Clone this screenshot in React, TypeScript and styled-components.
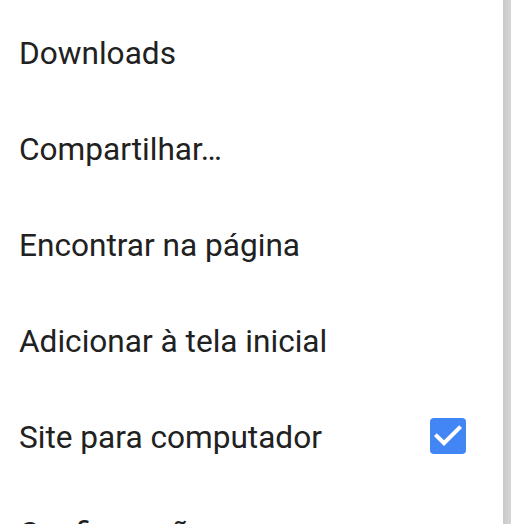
import React from "react";
import styled, { createGlobalStyle } from "styled-components";

const Global = createGlobalStyle`
  html, body { margin: 0; padding: 0; background: #ffffff; }
  body { font-family: Roboto, "Noto Sans", Arial, sans-serif; overflow: hidden; }
`;

const Screen = styled.div`
  display: flex;
  width: 511px;
  height: 524px;
  overflow: hidden;
`;

const Menu = styled.ul`
  flex: 1;
  margin: 0;
  padding: 6px 0 0 0;
  list-style: none;
  background: #ffffff;
`;

const Edge = styled.div`
  width: 8px;
  background: linear-gradient(to right, #c9c9c9, #d6d6d6);
`;

const Item = styled.li`
  display: flex;
  align-items: center;
  justify-content: space-between;
  height: 96px;
  padding: 0 37px 0 19px;
  font-size: 31.6px;
  color: #212121;
  white-space: nowrap;
`;

const Label = styled.span`
  line-height: 1;
`;

const Check = styled.svg`
  width: 48px;
  height: 48px;
  margin-right: -6px;
  margin-top: -5px;
  flex: none;
`;

const CheckBox = () => (
  <Check viewBox="0 0 24 24">
    <rect x="3" y="3" width="18" height="18" rx="2" fill="#4285f4" />
    <path
      d="M5 12 L6.41 10.59 L10 14.17 L17.59 6.58 L19 8 L10 17 Z"
      fill="#ffffff"
    />
  </Check>
);

const items: { label: string; checked?: boolean }[] = [
  { label: "Downloads" },
  { label: "Compartilhar…" },
  { label: "Encontrar na página" },
  { label: "Adicionar à tela inicial" },
  { label: "Site para computador", checked: true },
  { label: "Configurações" },
];

export default function App() {
  return (
    <>
      <Global />
      <Screen>
        <Menu>
          {items.map((it) => (
            <Item key={it.label}>
              <Label>{it.label}</Label>
              {it.checked && <CheckBox />}
            </Item>
          ))}
        </Menu>
        <Edge />
      </Screen>
    </>
  );
}
